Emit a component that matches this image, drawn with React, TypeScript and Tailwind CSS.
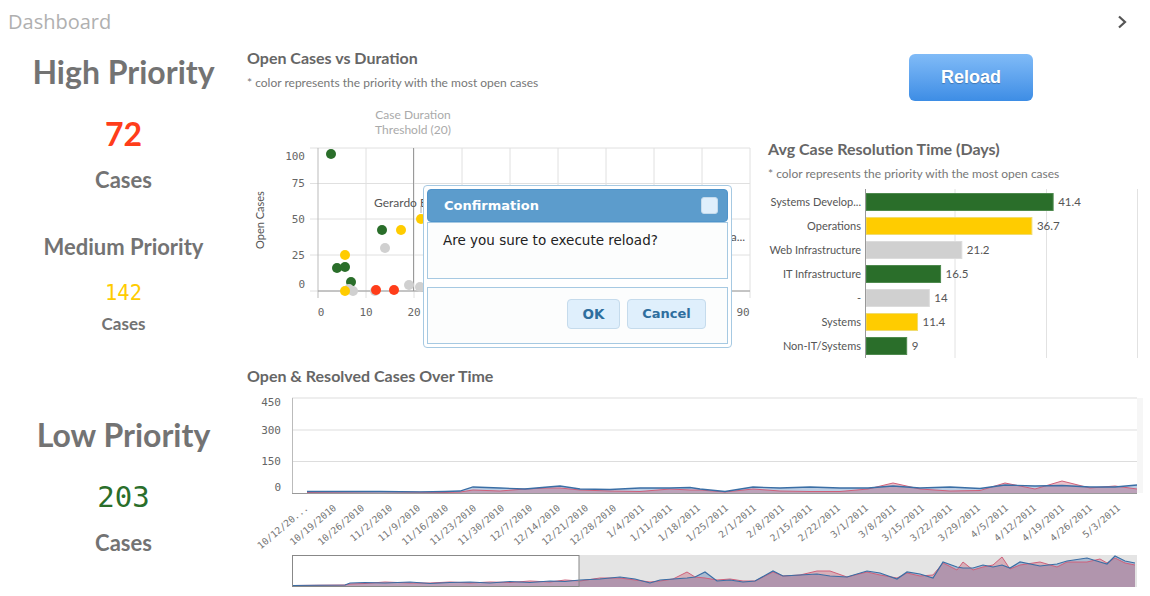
import React from "react";

const GREEN = "#2a6e2a";
const YELLOW = "#ffcc00";
const GRAY = "#d0d0d0";
const RED = "#ff3d1a";

const mainData: [number, number, number][] = [
  [307, 1.5, 0.5], [340, 1.5, 1], [380, 1.5, 1.5], [420, 1.2, 0.8], [445, 1.5, 0.5],
  [460, 2, 1], [473, 6, 3], [500, 5, 2], [525, 4, 4], [548, 6, 5], [560, 7, 5],
  [580, 4, 3], [610, 3.5, 2], [640, 5, 1.5], [670, 5, 4], [690, 5.5, 3], [700, 4, 3],
  [725, 1.5, 1], [753, 6, 4], [780, 5, 2], [810, 6, 1.5], [840, 5, 1.5], [868, 5, 4],
  [893, 7, 10], [920, 5, 4], [950, 6, 2], [980, 4.5, 2.5], [1005, 8, 10], [1035, 7, 4],
  [1062, 7.5, 12], [1090, 6, 5], [1115, 6, 7], [1137, 8, 4],
];

const miniData: [number, number, number][] = [
  [293, 585.5, 585.5], [345, 585, 585], [350, 583, 584], [365, 582.5, 583.5], [385, 583, 582],
  [410, 582, 583], [430, 583.5, 583], [450, 582.5, 582], [470, 582, 583], [490, 583, 582],
  [510, 581.5, 582.5], [530, 582.5, 581], [550, 581, 582], [565, 581.5, 580], [580, 580, 581],
  [600, 579, 578], [620, 577, 578], [635, 579, 580], [650, 583, 582], [660, 580, 581],
  [673, 579, 579], [687, 578, 572], [695, 577, 577], [705, 572, 578], [717, 581, 580],
  [730, 580, 579], [743, 582, 581], [755, 581, 581], [773, 571, 572], [783, 576, 576],
  [800, 575, 575], [817, 574, 571], [830, 576, 571], [847, 577, 577], [867, 571, 572],
  [880, 573, 575], [897, 579, 578], [907, 572, 573], [920, 574, 576], [933, 578, 575],
  [943, 562, 563], [957, 567, 570], [963, 568, 562], [973, 568, 570], [983, 565, 567],
  [993, 567, 565], [1002, 565, 557], [1010, 568, 569], [1020, 562, 565], [1040, 566, 562],
  [1057, 564, 567], [1067, 561, 562], [1087, 558, 562], [1100, 562, 559], [1107, 564, 563],
  [1115, 556, 558], [1125, 561, 563], [1135, 563, 565],
];

function linePath(pts: [number, number][]) {
  return pts.map((p, i) => `${i === 0 ? "M" : "L"}${p[0]} ${p[1]}`).join(" ");
}
function areaPath(pts: [number, number][], base: number) {
  return `${linePath(pts)} L${pts[pts.length - 1][0]} ${base} L${pts[0][0]} ${base} Z`;
}

const dates = [
  "10/12/20...", "10/19/2010", "10/26/2010", "11/2/2010", "11/9/2010", "11/16/2010",
  "11/23/2010", "11/30/2010", "12/7/2010", "12/14/2010", "12/21/2010", "12/28/2010",
  "1/4/2011", "1/11/2011", "1/18/2011", "1/25/2011", "2/1/2011", "2/8/2011", "2/15/2011",
  "2/22/2011", "3/1/2011", "3/8/2011", "3/15/2011", "3/22/2011", "3/29/2011", "4/5/2011",
  "4/12/2011", "4/19/2011", "4/26/2011", "5/3/2011",
];

const bars: { label: string; value: number; color: string; stroke: string }[] = [
  { label: "Systems Develop...", value: 41.4, color: GREEN, stroke: "#4f8a4f" },
  { label: "Operations", value: 36.7, color: YELLOW, stroke: "#f0dc70" },
  { label: "Web Infrastructure", value: 21.2, color: GRAY, stroke: "#dcdcdc" },
  { label: "IT Infrastructure", value: 16.5, color: GREEN, stroke: "#4f8a4f" },
  { label: "-", value: 14, color: GRAY, stroke: "#dcdcdc" },
  { label: "Systems", value: 11.4, color: YELLOW, stroke: "#f0dc70" },
  { label: "Non-IT/Systems", value: 9, color: GREEN, stroke: "#4f8a4f" },
];

const dots: [number, number, string][] = [
  [331, 154, GREEN], [382, 230, GREEN], [337, 268, GREEN], [345, 267, GREEN], [351, 282, GREEN],
  [385, 248, GRAY], [349, 289, GRAY], [353, 291, GRAY], [375, 291, GRAY], [409, 285, GRAY], [420, 287, GRAY],
  [401, 230, YELLOW], [421, 219, YELLOW], [345, 255, YELLOW], [345, 291, YELLOW],
  [376, 290, RED], [394, 290, RED],
];

function ScatterChart() {
  const vx = [318, 366, 414, 462, 510, 558, 606, 654, 702, 750];
  const hy = [148, 183.5, 219, 255, 291];
  const xLabels: [string, number][] = [["0", 321], ["10", 366], ["20", 414], ["90", 743]];
  return (
    <svg width="513" height="235" viewBox="247 95 513 235" className="block">
      <text x="413" y="119" textAnchor="middle" fontSize="12" fill="#aaaaaa" fontFamily="Lato, sans-serif">Case Duration</text>
      <text x="413" y="134" textAnchor="middle" fontSize="12" fill="#aaaaaa" fontFamily="Lato, sans-serif">Threshold (20)</text>
      {hy.map((y) => (
        <line key={y} x1="310" x2="750" y1={y} y2={y} stroke="#e0e0e0" strokeWidth="1" />
      ))}
      {vx.map((x, i) => (
        <line key={x} x1={x} x2={x} y1="148" y2="298" stroke={i === 0 ? "#bbbbbb" : "#e0e0e0"} strokeWidth="1" />
      ))}
      <line x1="413.5" x2="413.5" y1="148" y2="291" stroke="#9a9a9a" strokeWidth="1" />
      <line x1="318" x2="750" y1="291" y2="291" stroke="#999999" strokeWidth="1.2" />
      {[["100", 160], ["75", 187], ["50", 223], ["25", 259], ["0", 288]].map(([t, y]) => (
        <text key={t} x="305" y={y as number} textAnchor="end" fontSize="11" fill="#666" fontFamily="'DejaVu Sans Mono', monospace">{t}</text>
      ))}
      {xLabels.map(([t, x]) => (
        <text key={"xl" + t} x={x} y="316" textAnchor="middle" fontSize="11" fill="#666" fontFamily="'DejaVu Sans Mono', monospace">{t}</text>
      ))}
      <text x="0" y="0" transform="translate(264 220) rotate(-90)" textAnchor="middle" fontSize="11" fill="#555" fontFamily="Lato, sans-serif">Open Cases</text>
      {dots.map(([x, y, c], i) => (
        <circle key={i} cx={x} cy={y} r="5" fill={c} />
      ))}
      <text x="374" y="207" fontSize="12" fill="#555" fontFamily="Lato, sans-serif">Gerardo Bo...</text>
      <line x1="421" x2="421" y1="206" y2="213" stroke="#aaaaaa" strokeWidth="1" />
      <text x="722" y="241" fontSize="12" fill="#555" fontFamily="Lato, sans-serif">Ga...</text>
    </svg>
  );
}

function BarChart() {
  const scale = 4.52;
  return (
    <svg width="390" height="177" viewBox="760 183 390 177" className="block">
      {[955, 1046.5, 1137.5].map((x) => (
        <line key={x} x1={x} x2={x} y1="189" y2="358" stroke="#e2e2e2" strokeWidth="1" />
      ))}
      {bars.map((b, i) => {
        const cy = 202 + i * 24;
        const w = b.value * scale;
        return (
          <g key={b.label}>
            <text x="861" y={cy + 4} textAnchor="end" fontSize="11" fill="#555" fontFamily="Lato, sans-serif">{b.label}</text>
            <rect x="866" y={cy - 8.5} width={w} height="17" fill={b.color} stroke={b.stroke} strokeWidth="1" />
            <text x={866 + w + 5} y={cy + 4} fontSize="11.5" fill="#555" fontFamily="Lato, sans-serif">{b.value}</text>
          </g>
        );
      })}
      <line x1="865.5" x2="865.5" y1="189" y2="358" stroke="#999999" strokeWidth="1" />
    </svg>
  );
}

function LineChart() {
  const base = 493;
  const blue = mainData.map((d) => [d[0], base - d[1]] as [number, number]);
  const red = mainData.map((d) => [d[0], base - d[2]] as [number, number]);
  const mBlue = miniData.map((d) => [d[0], d[1]] as [number, number]);
  const mRed = miniData.map((d) => [d[0], d[2]] as [number, number]);
  return (
    <svg width="903" height="208" viewBox="247 388 903 208" className="block">
      <defs>
        <clipPath id="miniClip">
          <rect x="292" y="555" width="845" height="32" />
        </clipPath>
      </defs>
      <rect x="1137" y="398" width="6" height="95" fill="#f6f6f6" />
      {[398, 430, 461.5].map((y) => (
        <line key={y} x1="292" x2="1137" y1={y} y2={y} stroke="#dddddd" strokeWidth="1" />
      ))}
      <line x1="292.5" x2="292.5" y1="398" y2="493" stroke="#bbbbbb" strokeWidth="1" />
      {[["450", 406], ["300", 434], ["150", 465], ["0", 491]].map(([t, y]) => (
        <text key={t} x="281" y={y as number} textAnchor="end" fontSize="11" fill="#666" fontFamily="'DejaVu Sans Mono', monospace">{t}</text>
      ))}
      <path d={areaPath(blue, base)} fill="#3d6fb0" fillOpacity="0.35" />
      <path d={areaPath(red, base)} fill="#c0506a" fillOpacity="0.35" />
      <path d={linePath(red)} fill="none" stroke="#d0607a" strokeWidth="1" />
      <path d={linePath(blue)} fill="none" stroke="#3a6ea5" strokeWidth="1.3" />
      <line x1="292" x2="1137" y1="493.5" y2="493.5" stroke="#999999" strokeWidth="1" />
      {dates.map((d, i) => {
        const x = 309 + i * 28;
        const y = 509;
        return (
          <text key={d} x={x} y={y} textAnchor="end" fontSize="9.5" fill="#777" fontFamily="'DejaVu Sans Mono', monospace" transform={`rotate(-40 ${x} ${y})`}>{d}</text>
        );
      })}
      <rect x="579" y="555" width="558" height="32" fill="#e4e4e4" />
      <g clipPath="url(#miniClip)">
        <path d={areaPath(mBlue, 587)} fill="#3d6fb0" fillOpacity="0.35" />
        <path d={areaPath(mRed, 587)} fill="#c0506a" fillOpacity="0.35" />
        <path d={linePath(mRed)} fill="none" stroke="#d0607a" strokeWidth="1" />
        <path d={linePath(mBlue)} fill="none" stroke="#3a6ea5" strokeWidth="1.2" />
      </g>
      <rect x="292.5" y="555.5" width="286.5" height="31" fill="none" stroke="#888888" strokeWidth="1" />
    </svg>
  );
}

export default function App() {
  return (
    <div className="relative w-[1150px] h-[596px] overflow-hidden bg-white font-['Lato',sans-serif]">
      <header className="h-[44px] flex items-center justify-between pl-[8px] pr-[22px]">
        <span className="text-[20px] text-[#b0b0b0] font-['Open_Sans',sans-serif]">Dashboard</span>
        <svg width="12" height="14" viewBox="0 0 12 14" className="block">
          <path d="M3 1.5 L9 7 L3 12.5" fill="none" stroke="#555" strokeWidth="2.2" />
        </svg>
      </header>
      <div className="flex">
        <aside className="w-[247px] shrink-0 flex flex-col items-center text-[#737373] font-bold">
          <div className="mt-[8px] h-[40px] leading-[40px] text-[32px]">High Priority</div>
          <div className="mt-[22px] h-[40px] leading-[40px] text-[32px] text-[#ff3d1a]">72</div>
          <div className="mt-[12px] h-[28px] leading-[28px] text-[22px]">Cases</div>
          <div className="mt-[38px] h-[30px] leading-[30px] text-[22px]">Medium Priority</div>
          <div className="mt-[16px] h-[30px] leading-[30px] text-[20.5px] font-normal text-[#ffcc00] font-['DejaVu_Sans_Mono',monospace]">142</div>
          <div className="mt-[5px] h-[22px] leading-[22px] text-[17px]">Cases</div>
          <div className="mt-[80px] h-[40px] leading-[40px] text-[32px]">Low Priority</div>
          <div className="mt-[22px] h-[40px] leading-[40px] text-[29px] font-normal text-[#2a6e2a] font-['DejaVu_Sans_Mono',monospace]">203</div>
          <div className="mt-[12px] h-[28px] leading-[28px] text-[22px]">Cases</div>
        </aside>
        <main className="flex-1 flex flex-col">
          <div className="flex h-[321px]">
            <section className="w-[513px] shrink-0 flex flex-col">
              <h2 className="mt-[4px] h-[20px] leading-[20px] text-[16px] font-bold text-[#666]">Open Cases vs Duration</h2>
              <p className="mt-[8px] h-[14px] leading-[14px] text-[12px] text-[#777]">* color represents the priority with the most open cases</p>
              <div className="mt-[5px]">
                <ScatterChart />
              </div>
            </section>
            <section className="flex-1 flex flex-col">
              <button className="mt-[10px] ml-[149px] w-[124px] h-[47px] rounded-[6px] bg-gradient-to-b from-[#80bbf7] to-[#3d8de5] text-white text-[18px] font-bold font-['Liberation_Sans',sans-serif] [text-shadow:0_1px_1px_rgba(0,0,0,0.25)]">
                Reload
              </button>
              <h2 className="mt-[38px] ml-[8px] h-[20px] leading-[20px] text-[16px] font-bold text-[#666]">Avg Case Resolution Time (Days)</h2>
              <p className="mt-[8px] ml-[8px] h-[14px] leading-[14px] text-[12px] text-[#777]">* color represents the priority with the most open cases</p>
              <div className="mt-[2px]">
                <BarChart />
              </div>
            </section>
          </div>
          <h2 className="mt-[1px] h-[20px] leading-[20px] text-[16px] font-bold text-[#666]">Open &amp; Resolved Cases Over Time</h2>
          <div className="mt-[2px]">
            <LineChart />
          </div>
        </main>
      </div>

      <div className="absolute left-[423px] top-[185px] w-[309px] h-[163px] rounded-[4px] border border-[#a6c9e2] bg-white p-[3px] flex flex-col font-['DejaVu_Sans',sans-serif]">
        <div className="h-[33px] shrink-0 rounded-[4px] bg-[#5c9ccc] border border-[#4f94cb] flex items-center justify-between pl-[16px] pr-[9px]">
          <span className="text-white font-bold text-[13px]">Confirmation</span>
          <span className="w-[17px] h-[17px] rounded-[3px] bg-[#dfeffc] border border-[#c5dbec]" />
        </div>
        <div className="h-[57px] shrink-0 border border-[#a6c9e2] bg-[#fcfdfd] px-[15px] pt-[8px] text-[13.5px] leading-[18px] text-[#222]">
          Are you sure to execute reload?
        </div>
        <div className="mt-[8px] flex-1 border border-[#a6c9e2] bg-[#fcfdfd] flex justify-end items-start pt-[11px] pr-[21px] gap-[7px]">
          <button className="w-[53px] h-[30px] rounded-[4px] bg-[#dfeffc] border border-[#c5dbec] text-[#2e6e9e] font-bold text-[13.5px]">OK</button>
          <button className="w-[79px] h-[30px] rounded-[4px] bg-[#dfeffc] border border-[#c5dbec] text-[#2e6e9e] font-bold text-[13px]">Cancel</button>
        </div>
      </div>
    </div>
  );
}
